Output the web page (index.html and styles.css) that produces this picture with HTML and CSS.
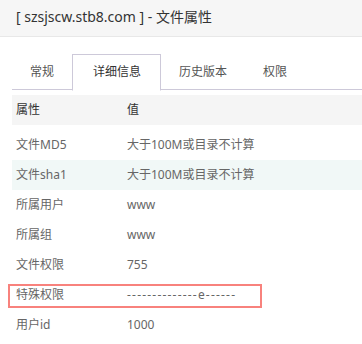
FILE: index.html
```html
<!DOCTYPE html>
<html lang="zh-CN">
<head>
    <meta charset="UTF-8">
    <title>文件属性</title>
    <link rel="stylesheet" href="styles.css">
</head>
<body>
    <div class="dialog-title">[ szsjscw.stb8.com ] - 文件属性</div>
    <div class="dialog-body">
        <ul class="tabs">
            <li>常规</li>
            <li class="active">详细信息</li>
            <li>历史版本</li>
            <li>权限</li>
        </ul>
        <div class="prop-list">
            <div class="prop-row head">
                <span>属性</span>
                <span>值</span>
            </div>
            <div class="prop-rows">
                <div class="prop-row"><span>文件MD5</span><span>大于100M或目录不计算</span></div>
                <div class="prop-row stripe"><span>文件sha1</span><span>大于100M或目录不计算</span></div>
                <div class="prop-row"><span>所属用户</span><span>www</span></div>
                <div class="prop-row"><span>所属组</span><span>www</span></div>
                <div class="prop-row"><span>文件权限</span><span>755</span></div>
                <div class="prop-row marked">
                    <span>特殊权限</span><span class="mode">--------------e------</span>
                    <div class="mark-box"></div>
                </div>
                <div class="prop-row"><span>用户id</span><span>1000</span></div>
            </div>
        </div>
    </div>
</body>
</html>
```

FILE: styles.css
```css
body {
    margin: 0;
    background: #fff;
    font-family: "Noto Sans", "Noto Sans CJK SC", sans-serif;
    color: #666;
    overflow: hidden;
}
.dialog-title {
    height: 36px;
    line-height: 34px;
    padding-left: 16px;
    font-size: 14px;
    color: #333;
    background: #f6f6f6;
    border-bottom: 1px solid #e8e8e8;
}
.dialog-body {
    padding: 17px 0 0 12px;
}
.tabs {
    display: flex;
    margin: 0;
    padding: 0;
    list-style: none;
    height: 35px;
    border-bottom: 1px solid #cdc9d9;
}
.tabs li {
    padding: 0 18px;
    line-height: 35px;
    font-size: 12px;
    color: #555;
}
.tabs li.active {
    padding: 0 19px 0 20px;
    height: 35px;
    background: #fff;
    color: #333;
    border: 1px solid #cdc9d9;
    border-bottom-color: #fff;
    line-height: 34px;
}
.prop-list {
    margin-top: 5px;
    font-size: 12px;
}
.prop-row {
    display: grid;
    grid-template-columns: 111px 1fr;
    height: 30px;
    line-height: 30px;
}
.prop-row span {
    padding-left: 4px;
}
.prop-row span.mode {
    letter-spacing: 1.2px;
}
.prop-row.head {
    background: #f5f5f5;
    color: #333;
}
.prop-rows {
    margin-top: 5px;
}
.prop-row.stripe {
    background: #f1f8f7;
}
.prop-row.marked {
    position: relative;
}
.mark-box {
    position: absolute;
    left: -4px;
    top: 4px;
    width: 250px;
    height: 20px;
    border: 2px solid #f8827d;
}
```
